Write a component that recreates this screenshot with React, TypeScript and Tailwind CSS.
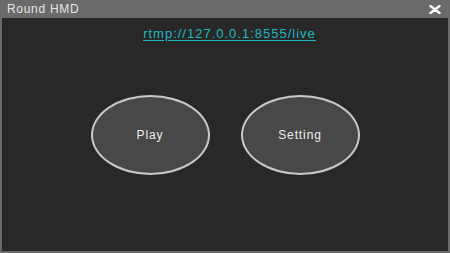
import React from "react";

export default function App() {
  const font = { fontFamily: '"Liberation Sans", Arial, sans-serif' };
  return (
    <div className="w-[450px] h-[253px] bg-[#6a6a6a] flex flex-col" style={font}>
      <div className="h-[18px] flex items-center justify-between pl-[7px] pr-[9px]">
        <span className="text-[12px] leading-none tracking-[0.7px] text-[#e4e4e4]">Round HMD</span>
        <svg width="12" height="9" viewBox="0 0 12 9" className="mt-[1px]">
          <path d="M1.5 1 L10.5 8 M1.5 8 L10.5 1" stroke="#ffffff" strokeWidth="2.4" strokeLinecap="round" />
        </svg>
      </div>
      <div className="flex-1 mx-[2px] mb-[2px] bg-[#282828] flex flex-col">
        <div className="h-[30px] pt-[9px] pl-[9px] flex justify-center">
          <a className="text-[13px] leading-[14px] tracking-[1px] text-[#1bb8c4] underline underline-offset-2 cursor-pointer">
            rtmp://127.0.0.1:8555/live
          </a>
        </div>
        <div className="flex-1 flex items-center justify-center gap-[31px] pb-[30px]">
          <button className="w-[119px] h-[80px] rounded-[50%] bg-[#484848] border-2 border-[#c9c9c9] text-[12px] tracking-[0.9px] text-[#ececec]">
            Play
          </button>
          <button className="w-[119px] h-[80px] rounded-[50%] bg-[#484848] border-2 border-[#c9c9c9] text-[12px] tracking-[0.9px] text-[#ececec]">
            Setting
          </button>
        </div>
      </div>
    </div>
  );
}
